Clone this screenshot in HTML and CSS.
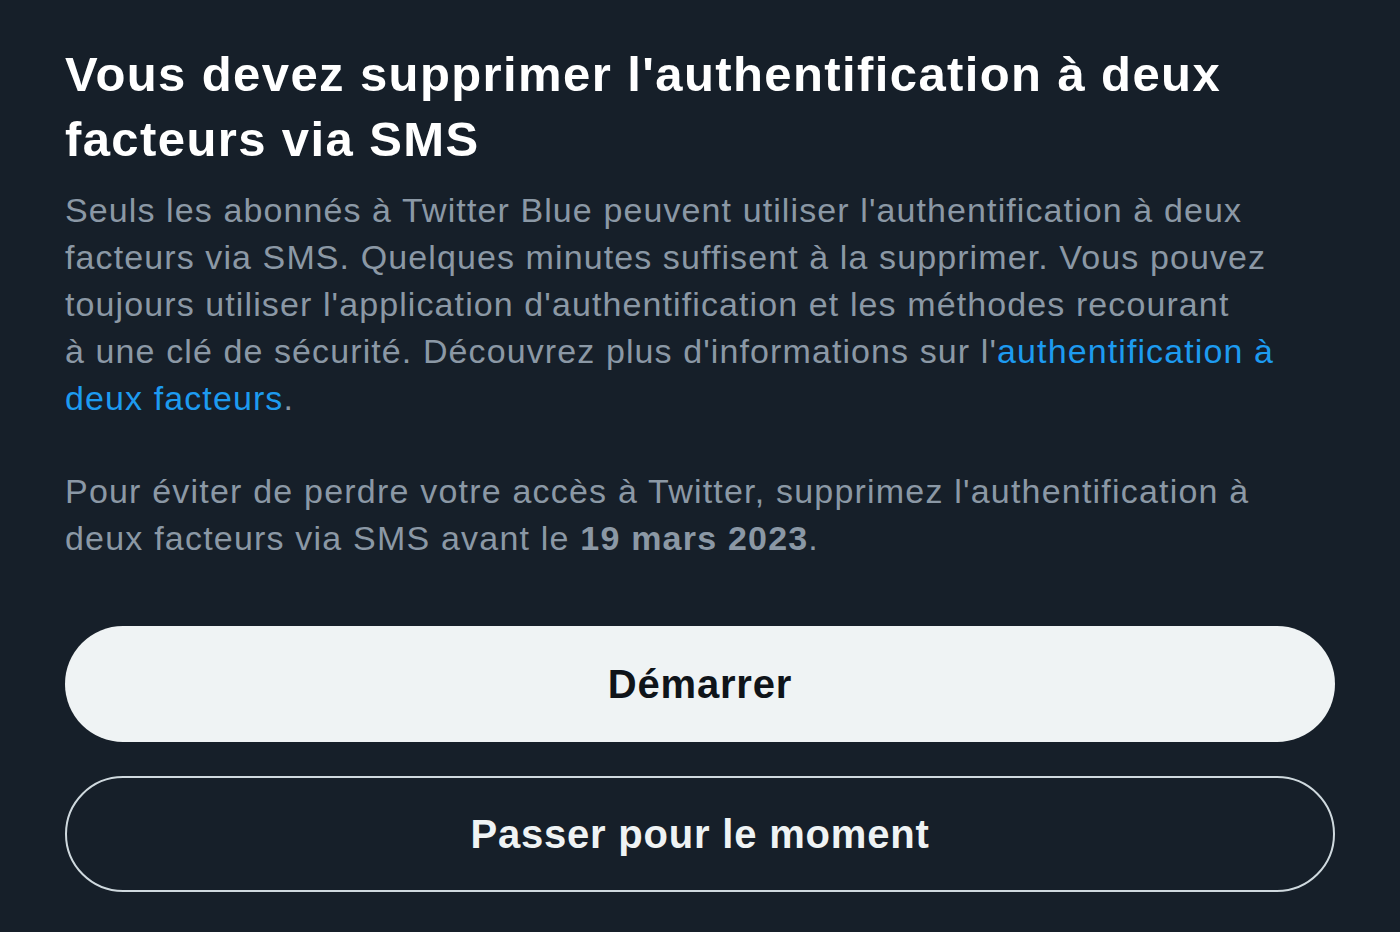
FILE: index.html
```html
<!DOCTYPE html>
<html>
<head>
  <title>Authentification à deux facteurs</title>
  <link rel="stylesheet" href="styles.css">
</head>
<body>
  <div class="sheet">
    <h1 class="title">Vous devez supprimer l'authentification à deux<br>facteurs via SMS</h1>
    <p class="text">Seuls les abonnés à Twitter Blue peuvent utiliser l'authentification à deux<br>facteurs via SMS. Quelques minutes suffisent à la supprimer. Vous pouvez<br>toujours utiliser l'application d'authentification et les méthodes recourant<br>à une clé de sécurité. Découvrez plus d'informations sur l'<a href="#">authentification à<br>deux facteurs</a>.</p>
    <p class="text deadline">Pour éviter de perdre votre accès à Twitter, supprimez l'authentification à<br>deux facteurs via SMS avant le <b>19 mars 2023</b>.</p>

    <div class="actions">
      <button class="btn primary">Démarrer</button>
      <button class="btn outline">Passer pour le moment</button>
    </div>
  </div>
</body>
</html>
```

FILE: styles.css
```css
body {
  margin: 0;
  background-color: #161f29;
  font-family: "Liberation Sans", Arial, sans-serif;
  min-height: 100vh;
}

.sheet {
  padding: 42px 65px 0 65px;
}

.title {
  color: #ffffff;
  font-size: 49px;
  line-height: 65px;
  font-weight: bold;
  letter-spacing: 1.4px;
  margin: 0;
}

.text {
  color: #8b98a5;
  font-size: 34px;
  line-height: 47px;
  letter-spacing: 1.1px;
  margin: 15px 0 0 0;
  white-space: nowrap;
}

.text a {
  color: #1d9bf0;
  text-decoration: none;
}

.text b {
  font-weight: bold;
}

.deadline {
  margin-top: 46px;
  letter-spacing: 1.2px;
}

.actions {
  display: flex;
  flex-direction: column;
  gap: 34px;
  margin-top: 64px;
}

.btn {
  height: 116px;
  border-radius: 58px;
  font-family: "Liberation Sans", Arial, sans-serif;
  font-size: 40px;
  font-weight: bold;
  letter-spacing: 0.8px;
  cursor: pointer;
}

.primary {
  background-color: #eff3f4;
  color: #0f1419;
  border: none;
}

.outline {
  background-color: transparent;
  color: #eff3f4;
  border: 2px solid #cfd9de;
}
```
